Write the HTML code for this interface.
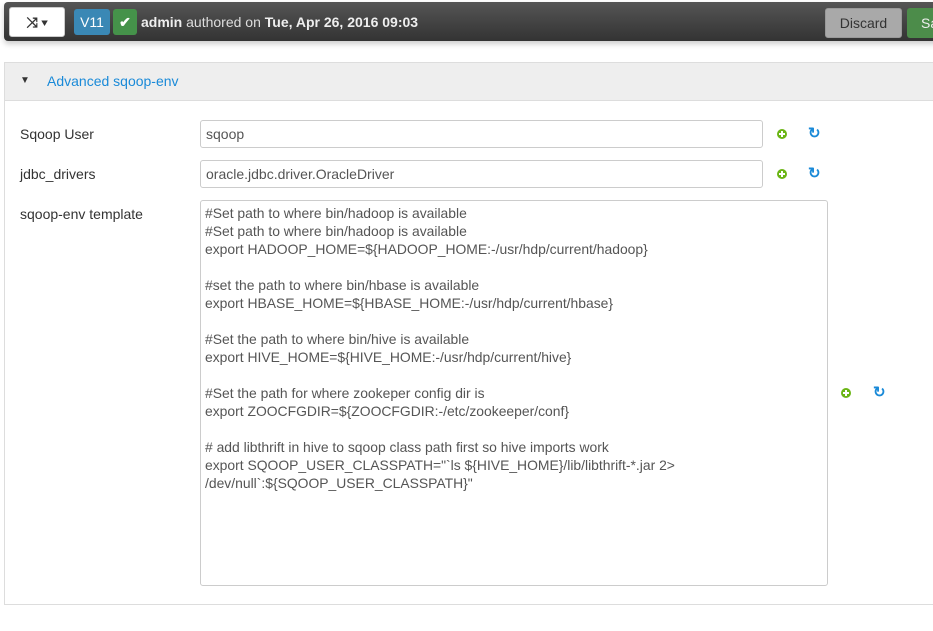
<!DOCTYPE html>
<html><head><style>
body{margin:0;width:933px;height:631px;background:#fff;font-family:"Liberation Sans",sans-serif;font-size:14px;color:#333;position:relative;overflow:hidden}
.bar{position:absolute;left:4px;top:2px;width:940px;height:39px;border-radius:4px;background:linear-gradient(#555,#333);box-shadow:0 3px 6px rgba(0,0,0,.2)}
.btn{position:absolute;border-radius:3px;box-sizing:border-box}
.abs{position:absolute}
.panel{position:absolute;left:4px;top:62px;width:940px;height:543px;border:1px solid #ddd;box-sizing:border-box}
.ph{height:37px;background:#eee;border-bottom:1px solid #ddd}
.inp{position:absolute;left:200px;border:1px solid #ccc;border-radius:3px;box-sizing:border-box;background:#fff;padding:0 5px;line-height:26px;color:#555}
.lbl{position:absolute;left:20px}
.plus{position:absolute;width:10px;height:10px;border-radius:50%;background:#6bb515;}
.plus:before{content:"";position:absolute;left:2px;top:4px;width:6px;height:2px;background:#fff}
.plus:after{content:"";position:absolute;left:4px;top:2px;width:2px;height:6px;background:#fff}
.ref{position:absolute;color:#1a8ad8;font-weight:bold;font-size:15px}
</style></head><body>
<div class="bar">
 <div class="btn" style="left:5px;top:5px;width:56px;height:30px;background:#fff;border:1px solid #ccc;font-size:14px;line-height:28px;text-align:center;color:#333;font-weight:bold">⤨ ▾</div>
 <div class="btn" style="left:70px;top:7px;width:36px;height:26px;background:#3a88b5;color:#fff;line-height:26px;text-align:center">V11</div>
 <div class="btn" style="left:109px;top:7px;width:24px;height:26px;background:#45924a;color:#fff;line-height:26px;text-align:center;font-weight:bold">✔</div>
 <div class="abs" style="left:137px;top:12px;color:#ddd;font-size:14px"><b style="color:#eee">admin</b> authored on <b style="color:#eee">Tue, Apr 26, 2016 09:03</b></div>
 <div class="btn" style="left:821px;top:6px;width:77px;height:30px;background:#a9a9a9;border:1px solid #999;color:#333;line-height:28px;text-align:center">Discard</div>
 <div class="btn" style="left:903px;top:6px;width:60px;height:30px;background:#4c8c4a;color:#eee;line-height:30px;padding-left:14px">Save</div>
</div>
<div class="panel"><div class="ph">
 <span class="abs" style="left:15px;top:12px;font-size:10px;color:#333">▼</span>
 <span class="abs" style="left:42px;top:10px;color:#1a8ad8">Advanced sqoop-env</span>
</div></div>
<div class="lbl" style="top:126px">Sqoop User</div>
<div class="inp" style="top:120px;width:563px;height:28px">sqoop</div>
<div class="plus" style="left:777px;top:129px"></div><div class="ref" style="left:808px;top:124px">↻</div>
<div class="lbl" style="top:166px">jdbc_drivers</div>
<div class="inp" style="top:160px;width:563px;height:28px">oracle.jdbc.driver.OracleDriver</div>
<div class="plus" style="left:777px;top:169px"></div><div class="ref" style="left:808px;top:164px">↻</div>
<div class="lbl" style="top:206px">sqoop-env template</div>
<div class="inp" style="top:200px;width:628px;height:386px;line-height:18px;padding-top:3px;padding-left:4px;white-space:pre;color:#555;font-size:13.9px">#Set path to where bin/hadoop is available
#Set path to where bin/hadoop is available
export HADOOP_HOME=${HADOOP_HOME:-/usr/hdp/current/hadoop}

#set the path to where bin/hbase is available
export HBASE_HOME=${HBASE_HOME:-/usr/hdp/current/hbase}

#Set the path to where bin/hive is available
export HIVE_HOME=${HIVE_HOME:-/usr/hdp/current/hive}

#Set the path for where zookeper config dir is
export ZOOCFGDIR=${ZOOCFGDIR:-/etc/zookeeper/conf}

# add libthrift in hive to sqoop class path first so hive imports work
export SQOOP_USER_CLASSPATH="`ls ${HIVE_HOME}/lib/libthrift-*.jar 2&gt;
/dev/null`:${SQOOP_USER_CLASSPATH}"</div>
<div class="plus" style="left:841px;top:388px"></div><div class="ref" style="left:873px;top:383px">↻</div>
</body></html>
